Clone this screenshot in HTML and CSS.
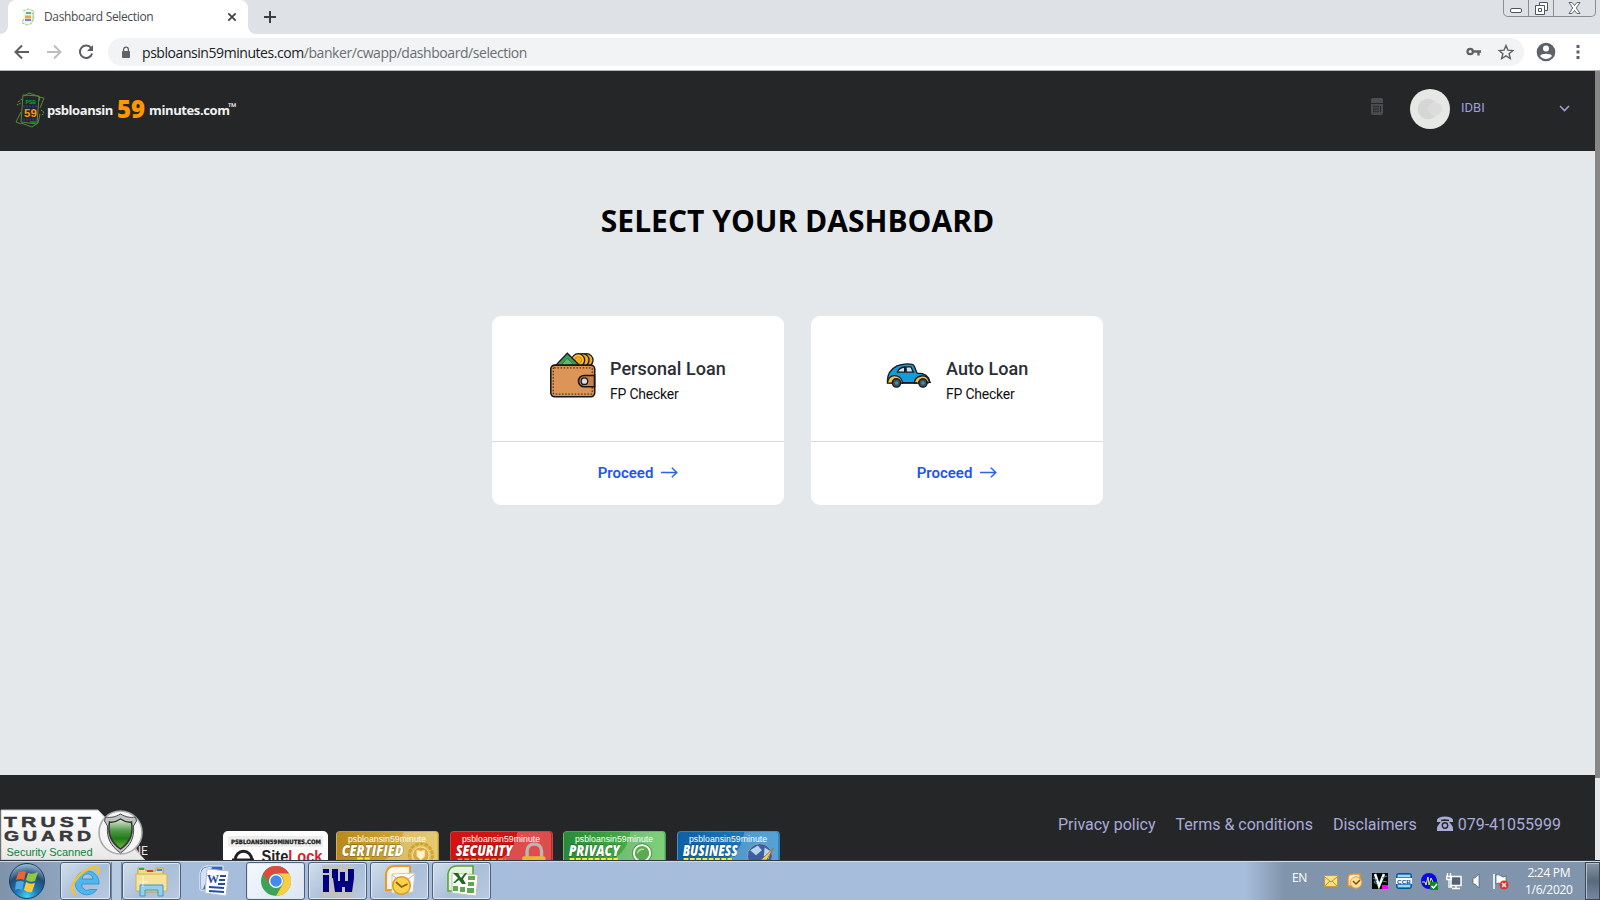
FILE: index.html
```html
<!DOCTYPE html>
<html lang="en">
<head>
<meta charset="utf-8">
<title>Dashboard Selection</title>
<link rel="stylesheet" href="styles.css">
</head>
<body>
<div class="tabstrip">
  <div class="tab">
    <svg class="favicon" width="16" height="18" viewBox="0 0 16 18"><path d="M4 2l9 1-1 12-9 1z" fill="#edf6e8"/><path d="M3 3l5-2 6 2-2 12-4 2-6-2 2-5M12 5l2 3-1 5" fill="none" stroke="#9ccb7c" stroke-dasharray="3 1"/><path d="M6 5h5" stroke="#55b98c" stroke-width="2"/><path d="M5 9h6" stroke="#f6a04c" stroke-width="3"/><path d="M5 12h6" stroke="#7788c8" stroke-width="2"/></svg>
    <span class="tab-title">Dashboard Selection</span>
    <svg width="10" height="10" viewBox="0 0 10 10"><path d="M1.3 1.3l7.4 7.4M8.7 1.3L1.3 8.7" stroke="#3c4043" stroke-width="1.7"/></svg>
  </div>
  <svg class="newtab" width="12" height="12" viewBox="0 0 12 12"><path d="M6 0v12M0 6h12" stroke="#3c4043" stroke-width="2"/></svg>
  <div class="winctl">
    <span class="wc wc-min"><svg width="14" height="8" viewBox="0 0 14 8"><rect x="1.500" y="2.500" width="11" height="4" rx="1.500" fill="#fff" stroke="#50545a"/></svg></span>
    <span class="wc wc-max"><svg width="13" height="13" viewBox="0 0 13 13"><path d="M4.500.5h8v8h-3v4h-9v-9h4z" fill="#fff" stroke="#50545a"/><path d="M4.500 3.500h5v5M3.500 6.500h3v3h-3z" fill="none" stroke="#50545a"/></svg></span>
    <span class="wc wc-close"><svg width="13" height="12" viewBox="0 0 13 12"><path d="M1 .5h3l2.500 3L9 .5h3L8.300 6l3.700 5.500H9L6.500 8.500 4 11.500H1L4.700 6z" fill="#fff" stroke="#50545a" stroke-width=".9"/></svg></span>
  </div>
</div>
<div class="toolbar">
  <svg class="nav" width="16" height="16" viewBox="0 0 16 16"><path d="M15 8H2M8 1.500L1.500 8 8 14.500" fill="none" stroke="#5a5e63" stroke-width="2"/></svg>
  <svg class="nav" width="16" height="16" viewBox="0 0 16 16"><path d="M1 8h13M8 1.500L14.500 8 8 14.500" fill="none" stroke="#bcbdbf" stroke-width="2"/></svg>
  <svg class="nav" width="16" height="16" viewBox="0 0 16 16"><path d="M13.200 4.200A6.200 6.200 0 1 0 14.100 9.500" fill="none" stroke="#5a5e63" stroke-width="2"/><path d="M15 1v6H9z" fill="#5a5e63"/></svg>
  <div class="omnibox">
    <svg width="10" height="13" viewBox="0 0 10 13"><rect x="1" y="5" width="8" height="7" rx="1" fill="#5f6368"/><path d="M2.600 5.500V3.500a2.400 2.400 0 0 1 4.800 0v2" fill="none" stroke="#5f6368" stroke-width="1.300"/></svg>
    <span class="url"><b>psbloansin59minutes.com</b>/banker/cwapp/dashboard/selection</span>
    <svg class="key" width="15" height="10" viewBox="0 0 15 10"><circle cx="4.200" cy="4.500" r="2.700" fill="none" stroke="#5f6368" stroke-width="2.300"/><path d="M7 4.500h8M12.500 4.500v4" stroke="#5f6368" stroke-width="2.400"/></svg>
    <svg width="16" height="16" viewBox="0 0 16 16"><path d="M8 1.500l1.900 4.600 5 .4-3.800 3.200 1.200 4.800L8 11.900l-4.300 2.600 1.200-4.800L1.100 6.500l5-.4z" fill="none" stroke="#5f6368" stroke-width="1.400"/></svg>
  </div>
  <svg class="person" width="20" height="20" viewBox="0 0 20 20"><circle cx="10" cy="10" r="9.300" fill="#5f6368"/><circle cx="10" cy="6.500" r="3" fill="#fff"/><path d="M4 14c1-3 11-3 12 0-3 4-9 4-12 0z" fill="#fff"/></svg>
  <svg width="4" height="14" viewBox="0 0 4 14"><path d="M.5 0h3v3h-3zM.5 5.500h3v3h-3zM.5 11h3v3h-3z" fill="#5f6368"/></svg>
</div>
<div class="viewport">
  <div class="page">
    <header class="header">
      <svg class="notes" width="30" height="36" viewBox="0 0 30 36"><g fill="none" stroke="#558a3c" stroke-width="1"><path d="M8 3l16 1-2 28-16-2z"/><path d="M9 4l5-3 11 4-1 4M24 5l5 1-4 10M25 22l-2 9-6 4-11-4M6 20L1 30l5 2"/><path d="M3 10l4-3M2 13l4-2M26 18l3 2-2 4" stroke="#a9b568" stroke-dasharray="1 1"/></g><path d="M8 14.500h14M8 27.500h14" stroke="#2a3180" stroke-width="2" stroke-dasharray="2 1"/><path d="M15 30h6" stroke="#087a2b" stroke-width="2"/><text x="10.500" y="12" class="n-psb" textLength="10.500" lengthAdjust="spacingAndGlyphs">PSB</text><text x="9" y="25" class="n-59">59</text></svg>
      <span class="brand-a">psbloansin</span><span class="brand-59">59</span><span class="brand-b">minutes.com</span><span class="brand-tm">™</span>
      <svg class="calc" width="12" height="17" viewBox="0 0 12 17"><path d="M2 0h8a2 2 0 0 1 2 2v3H0V2a2 2 0 0 1 2-2zM0 6h12v9a2 2 0 0 1-2 2H2a2 2 0 0 1-2-2z" fill="#4c4d50"/><path d="M2 8.500h6M2 11h6M2 13.500h6" stroke="#252628" stroke-width="1.500" stroke-dasharray="1.500 .7"/><path d="M9.500 8v6" stroke="#252628"/></svg>
      <svg class="avatar" width="40" height="40" viewBox="0 0 40 40"><circle cx="20" cy="20" r="20" fill="#e5e8e4"/><circle cx="18" cy="20" r="10.300" fill="#d5d6d5"/><circle cx="25.500" cy="20" r="6.500" fill="#dbdcdb" stroke="#e1e4e0" stroke-width=".7"/></svg>
      <span class="user">IDBI</span>
      <svg class="chev" width="11" height="7" viewBox="0 0 11 7"><path d="M1 1l4.500 4.500L10 1" fill="none" stroke="#9d9fda" stroke-width="1.600"/></svg>
    </header>
    <main class="main">
      <h1>SELECT YOUR DASHBOARD</h1>
      <div class="cards">
        <section class="card">
          <div class="card-top">
            <svg class="wallet" width="46" height="46" viewBox="0 0 46.500 46"><g stroke="#171717" stroke-width="1.300"><circle cx="37" cy="8" r="6.500" fill="#f5a91f"/><circle cx="33" cy="8" r="6.500" fill="#f5a91f"/><circle cx="28.500" cy="8" r="6.500" fill="#ffc02e"/><circle cx="28.500" cy="8" r="3.500" fill="#f7a91e" stroke="#c27c0c" stroke-width=".8"/><path d="M5 14L17.500 1l13 13z" fill="#3f9d57"/><path d="M11 13l6.500-7 7 7z" fill="#62b76f" stroke="#236b36" stroke-width=".8"/><rect x=".8" y="13" width="44.400" height="32" rx="4" fill="#dc9557" stroke-width="1.600"/></g><rect x="3.300" y="15.700" width="39.400" height="26.600" rx="1" fill="none" stroke="#4b321e" stroke-width="1.300" stroke-dasharray="1.500 1.700"/><path d="M45 23.500H34.500a5.700 5.700 0 0 0 0 11.400H45z" fill="#c98148" stroke="#171717" stroke-width="1.600"/><circle cx="34.800" cy="29.200" r="3.300" fill="#d9dde2" stroke="#171717" stroke-width="1.300"/></svg>
            <div><h2>Personal Loan</h2><p>FP Checker</p></div>
          </div>
          <a class="proceed">Proceed <svg width="17" height="11" viewBox="0 0 17 11"><path d="M0 5.500h15.500M10.800.7l5 4.800-5 4.800" fill="none" stroke="#2b62ef" stroke-width="1.500"/></svg></a>
        </section>
        <section class="card">
          <div class="card-top auto">
            <svg class="car" width="46" height="25" viewBox="0 0 47 26"><g stroke="#15191e" stroke-width="1.400"><path d="M1 19C1 12 5 6 11 3c4-2 12-2.500 16-1.500 3 .5 3 7 5 9 7 0 12 2 13 9l-2 1H3z" fill="#139bdc"/><path d="M1 21c0-10 14-11 16 0h-3c-1-6-7-6-8 0zM29 21c1-9 13-10 15-3l1.500 2-3 .5c-2-5-8-5-9 .5z" fill="#f6c443"/><path d="M11.500 9.500C13 5 16 4.500 19 4.200v5.300zM20.500 4h5l2.500 5.500h-7.500z" fill="#cde2f3"/><circle cx="10.500" cy="20.800" r="4.300" fill="#474c55"/><circle cx="38" cy="20.800" r="4.300" fill="#474c55"/></g><path d="M16 20.800h16" stroke="#15191e" stroke-width="1.500"/><circle cx="10.500" cy="20.800" r="1.800" fill="#2498d3"/><circle cx="38" cy="20.800" r="1.800" fill="#2498d3"/></svg>
            <div><h2>Auto Loan</h2><p>FP Checker</p></div>
          </div>
          <a class="proceed">Proceed <svg width="17" height="11" viewBox="0 0 17 11"><path d="M0 5.500h15.500M10.800.7l5 4.800-5 4.800" fill="none" stroke="#2b62ef" stroke-width="1.500"/></svg></a>
        </section>
      </div>
    </main>
    <footer class="footer">
      <svg class="trust" width="150" height="51" viewBox="0 0 150 51">
        <defs><linearGradient id="tg" x2="0" y2="1"><stop stop-color="#fff"/><stop offset="1" stop-color="#e8e8e8"/></linearGradient><linearGradient id="sh" x2="0" y2="1"><stop stop-color="#e2efda"/><stop offset=".4" stop-color="#4d9647"/><stop offset=".65" stop-color="#217c18"/><stop offset="1" stop-color="#70ba3e"/></linearGradient></defs>
        <text x="132.500" y="45.500" class="t-ne">NE</text>
        <path d="M1 1h97l47 50H1z" fill="url(#tg)" stroke="#bdbdbd"/>
        <text x="4" y="17.500" class="t-trust" textLength="91" lengthAdjust="spacingAndGlyphs">TRUST</text>
        <text x="4" y="32" class="t-trust" textLength="91" lengthAdjust="spacingAndGlyphs">GUARD</text>
        <text x="6.500" y="47" class="t-scan" textLength="86">Security Scanned</text>
        <circle cx="120.500" cy="23.500" r="21.500" fill="#f5f5f5" stroke="#aaa" stroke-width="1.600"/>
        <path d="M120.500 5c5 3 10 4 15 3l1 4-3 5c1 12-3 20-13 27-10-7-14-15-13-27l-3-5 1-4c5 1 10 0 15-3z" fill="#bfc2c1" stroke="#4b4d4c"/>
        <path d="M120.500 10q6 4 11 3c2 12-1 20-11 27-10-7-13-15-11-27q5 1 11-3z" fill="url(#sh)" stroke="#333" stroke-width="1.500"/>
      </svg>
      <div class="seals">
        <svg width="105" height="29" viewBox="0 0 105 29"><rect width="105" height="40" rx="5" fill="#fff"/><rect x="5" y="5" width="95" height="11" fill="#eee"/><text x="8" y="12.500" class="s-domain" textLength="90" lengthAdjust="spacingAndGlyphs">PSBLOANSIN59MINUTES.COM</text><path d="M12 32v-2c0-13 17-13 17 0v2" fill="none" stroke="#222" stroke-width="3"/><path d="M9 28.500h22" stroke="#222" stroke-width="2"/><text x="38.500" y="31" class="s-lock" textLength="61" lengthAdjust="spacingAndGlyphs">Site<tspan fill="#d81f2e">Lock</tspan></text></svg>
        <svg class="seal gold" viewBox="0 0 103 29"><path class="shine" d="M68 0h32q3 0 3 3v26H48Q64 22 68 0z"/><text x="10.500" y="10.300" class="s-url" textLength="81">psbloansin59minute</text><g stroke="#f8dfa0" fill="none"><circle cx="86" cy="24" r="12" stroke="#d6a02b" stroke-width="3" stroke-dasharray="4 1"/><circle cx="86" cy="24" r="8.500" fill="#d8a945"/><path d="M82 19q4 2 8 0v6l-4 4-4-4z" fill="#fff4c8"/></g><text x="4" y="25" class="s-name" textLength="64" lengthAdjust="spacingAndGlyphs">CERTIFIED</text><path d="M20 27.500h6M28 27.500h5" stroke="#f4ed32" stroke-width="2"/></svg>
        <svg class="seal red" viewBox="0 0 103 29"><path class="shine" d="M68 0h32q3 0 3 3v26H48Q64 22 68 0z"/><text x="10.500" y="10.300" class="s-url" textLength="81">psbloansin59minute</text><path d="M78 27v-7c0-10 15-10 15 0v7" fill="none" stroke="#b8b8b8" stroke-width="3.500"/><rect x="73" y="25" width="24" height="8" rx="2" fill="#eab632"/><text x="4" y="25" class="s-name" textLength="59" lengthAdjust="spacingAndGlyphs">SECURITY</text><path d="M6 28.300h50" stroke="#e69b1e" stroke-width="1.500" stroke-dasharray="5 2"/></svg>
        <svg class="seal green" viewBox="0 0 103 29"><path class="shine" d="M68 0h32q3 0 3 3v26H48Q64 22 68 0z"/><text x="10.500" y="10.300" class="s-url" textLength="81">psbloansin59minute</text><circle cx="80" cy="22" r="8.500" fill="#5caa50" stroke="#fff" stroke-width="2"/><circle cx="80" cy="22" r="10" fill="none" stroke="#568d4d"/><path d="M75 22q2-5 7-4" fill="none" stroke="#afe2a4" stroke-width="1.500"/><text x="4" y="25" class="s-name" textLength="53" lengthAdjust="spacingAndGlyphs">PRIVACY</text><path d="M5 28h50" stroke="#f4ed32" stroke-width="2" stroke-dasharray="5 1.500"/></svg>
        <svg class="seal blue" viewBox="0 0 103 29"><path class="shine" d="M68 0h32q3 0 3 3v26H48Q64 22 68 0z"/><text x="10.500" y="10.300" class="s-url" textLength="81">psbloansin59minute</text><circle cx="84" cy="25" r="13" fill="#405e9e" stroke="#9d9ac2"/><path d="M74 19l8-5 4 5-6 5zM89 16l6 4-2 8-5-3z" fill="#b7d7ed"/><path d="M85 29l13-12-7 12z" fill="#f3d55d" stroke="#8b742c"/><text x="4" y="25" class="s-name" textLength="57" lengthAdjust="spacingAndGlyphs">BUSINESS</text><path d="M5 28h50" stroke="#f4ed32" stroke-width="2" stroke-dasharray="5 1.500"/></svg>
      </div>
      <nav class="links"><a>Privacy policy</a><a>Terms &amp; conditions</a><a>Disclaimers</a><a class="phone"><svg width="16" height="16" viewBox="0 0 16 16"><path d="M0 6V3.500Q2 .5 8 .5t8 3V6h-4V3.700q-4-1-8 0V6zM4.500 5h7L15 9.500q1 1.500 1 3V15H0v-2.500q0-1.500 1-3z" fill="#a9abd9"/><circle cx="8" cy="9.500" r="2.700" fill="#a9abd9" stroke="#252628" stroke-width="1.400"/></svg>079-41055999</a></nav>
    </footer>
  </div>
  <div class="scroll"><div class="thumb"></div></div>
</div>
<div class="taskbar">
  <div class="start"><svg width="38" height="38" viewBox="0 0 38 38"><defs><radialGradient id="orb" cx=".5" cy=".95" r=".9"><stop stop-color="#46d2fe"/><stop offset=".35" stop-color="#1d7bb5"/><stop offset=".7" stop-color="#234b74"/><stop offset="1" stop-color="#8fb0ca"/></radialGradient></defs><circle cx="19" cy="19" r="17.500" fill="url(#orb)" stroke="#163e61"/><path d="M10 11q4-3 8-1l-2 8q-4-2-8 0z" fill="#f1652c"/><path d="M20 11q4 2 10-1l-3 9q-5 2-9-1z" fill="#94c840"/><path d="M8 20q4-2 8 0l-2 8q-4-2-7 0z" fill="#4aa8e6"/><path d="M18 20q4 3 9 1l-3 9q-4 1-8-2z" fill="#fcca36"/></svg></div>
  <div class="tb ie"><svg width="32" height="34" viewBox="0 0 32 34"><path d="M29 20a12 12 0 1 0-2 5.500h-7q-5 3-8-3v-2.500zM12 15q1-5 5.500-5t5.500 5z" fill="#4bb9ee" stroke="#2385c4" stroke-width=".7"/><path d="M6 30C-5 27 9 5 25 3q6 0 3 7" fill="none" stroke="#f4c331" stroke-width="2.600"/></svg></div>
  <div class="tb-sep"></div>
  <div class="tb ex"><svg width="34" height="32" viewBox="0 0 34 32"><path d="M3 3h6l2 3h10V3h7v24H3z" fill="#f5dc87" stroke="#c7a24b"/><path d="M4 4h5" stroke="#2eab4c" stroke-width="2"/><path d="M12 6h6" stroke="#d83b2c" stroke-width="2"/><path d="M22 5h5" stroke="#3689d5" stroke-width="2"/><path d="M1 9h31v17H1z" fill="#f7e29a" stroke="#d3b258"/><path d="M5 31V20h23v11h-5v-6H10v6z" fill="#8fd1ee" stroke="#4796c2"/><path d="M8 11v11M3 17h10" stroke="#fff" opacity=".7"/></svg></div>
  <div class="tb plain"><svg width="32" height="32" viewBox="0 0 32 32"><path d="M2 25V8q1-7 8-7h15v24z" fill="#3768b1" stroke="#f0f5ff"/><path d="M3 24V8q1-6 8-6h3L5 24z" fill="#d4e2f5"/><path d="M9 4l22 2-3 25L7 28z" fill="#fcfdff" stroke="#b5c0ce"/><path d="M22 11h6M21 15h6M20 19h7M11 22l15 1M11 26l15 1" stroke="#234e9c" stroke-width="2"/><text x="9" y="18" class="w-w">W</text></svg></div>
  <div class="tb active"><svg width="30" height="30" viewBox="0 0 30 30"><circle cx="15" cy="15" r="15" fill="#3ba457"/><path d="M2 7.500A15 15 0 0 1 28 7.500H15A7.500 7.500 0 0 0 8.500 18.700z" fill="#dd4b3e"/><path d="M28 7.500A15 15 0 0 1 15 30l6.500-11.300A7.500 7.500 0 0 0 15 7.500z" fill="#fbcd42"/><circle cx="15" cy="15" r="7" fill="#fff"/><circle cx="15" cy="15" r="5.700" fill="#4688f1"/></svg></div>
  <div class="tb"><svg width="32" height="32" viewBox="0 0 32 32"><path fill="#c2c2c2" d="M0 0h32v32H0z"/><path d="M1 4h6v4H1zM1 10h6v17H1zM10 4h6v12h2V7h5v9h3V4h6v9l-2 14h-7v-5h-3v5h-7l-2-14h-1z" fill="#000080"/></svg></div>
  <div class="tb"><svg width="32" height="32" viewBox="0 0 32 32"><path d="M2 25V9q1-8 9-8h15v24z" fill="#fff7e5" stroke="#ed9828" stroke-width="2"/><path d="M8 9l23-1-2 19-21 1z" fill="#fbfbfb" stroke="#c9c9c9"/><path d="M8 10l11 8 12-9" fill="none" stroke="#b9b9b9"/><circle cx="17.500" cy="20.500" r="8.800" fill="#fbd24d" stroke="#d99921" stroke-width="1.500"/><path d="M12 17l5.500 5 6-3" fill="none" stroke="#91610d" stroke-width="1.700"/></svg></div>
  <div class="tb"><svg width="32" height="32" viewBox="0 0 32 32"><path d="M2 26V9q1-8 9-8h16v25z" fill="#e5f2dc" stroke="#55a63a" stroke-width="1.600"/><path d="M6 8l26 2-2 21-24-3z" fill="#fff" stroke="#b7c6af"/><path d="M22 11h7v4h-7zM22 17h6v4h-6zM21 23h7v5h-7zM14 22h5v5h-5zM7 21h5v5H7z" fill="#61a653"/><path d="M7 8h5l3 5 4-5h2l-4 6 3 5h-4l-3-4-4 3H7l5-5z" fill="#256522"/></svg></div>
  <div class="tray">
    <span class="lang">EN</span>
    <svg width="14" height="12" viewBox="0 0 14 12"><path d="M.5.500h13v11H.5z" fill="#fbe08c" stroke="#c9983a"/><path d="M1 2l6 5 6-5M1 11l5-5M13 11L8 6" fill="none" stroke="#bb8b32"/></svg>
    <svg width="16" height="16" viewBox="0 0 16 16"><path d="M1 13V5q0-4 5-4h7v12z" fill="#fff1d3" stroke="#e98c25" stroke-width="1.500"/><circle cx="9" cy="9.500" r="5.700" fill="#fde09a" stroke="#e5a042"/><path d="M6 8l3 3 4-4" fill="none" stroke="#765011" stroke-width="1.500"/></svg>
    <svg width="16" height="16" viewBox="0 0 16 16"><path fill="#050505" d="M0 0h16v16H0z"/><path d="M3 1l4 12 5-12" fill="none" stroke="#fff" stroke-width="2.500"/><path d="M1 5l4 2-3 2 4 3M10 5l5-2M10 8l5 1" fill="none" stroke="#33a3aa"/><path fill="#f0e" d="M10 12h6v4h-6z"/></svg>
    <svg width="16" height="16" viewBox="0 0 16 16"><rect x=".5" y=".5" width="15" height="15" rx="2" fill="#3485c9" stroke="#075794"/><path d="M2 3h12M2 13h12" stroke="#9bdbf2" stroke-width="2"/><path fill="#fff" d="M0 5h16v6H0z"/><text x="1" y="10.500" class="ccb" textLength="14" lengthAdjust="spacingAndGlyphs">CCB</text></svg>
    <svg width="17" height="17" viewBox="0 0 17 17"><circle cx="8" cy="8" r="8" fill="#0909e7"/><path d="M1 9h3l1 3 2-8 1 8 2-7 2 4" fill="none" stroke="#e7ef4a"/><path fill="#0b8b22" d="M9 9h8v8H9z"/><path d="M10.500 13l2 2 3.500-4" fill="none" stroke="#fff" stroke-width="1.500"/></svg>
    <svg width="16" height="17" viewBox="0 0 16 17"><path d="M5 3.500h10v9H5z" fill="#536273" stroke="#fff" stroke-width="1.500"/><path d="M6 15.500h8M10 13v2M1.500 0v3M4.500 0v3M.700 3.500h4.600v3H.700zM3 7v7h3" fill="none" stroke="#fff" stroke-width="1.300"/></svg>
    <svg class="spk" width="9" height="16" viewBox="0 0 9 16"><path d="M1 5h2l4-4v14l-4-4H1z" fill="#fff" stroke="#5b6470" stroke-width=".8"/></svg>
    <svg class="flag" width="16" height="17" viewBox="0 0 16 17"><path d="M1 1v15" stroke="#fff" stroke-width="1.600"/><path d="M3 2q3-1 5 1t5 0v8q-3 2-5 0t-5 0z" fill="#fff" stroke="#4d5867" stroke-width=".7"/><circle cx="11" cy="12" r="4.500" fill="#dc352b"/><path d="M9 10l4 4M13 10l-4 4" stroke="#fff" stroke-width="1.300"/></svg>
    <div class="clock"><span>2:24 PM</span><span>1/6/2020</span></div>
    <div class="peek"></div>
  </div>
</div>
</body>
</html>
```
FILE: styles.css
```css
* { box-sizing: border-box; }
body { margin: 0; width: 1600px; height: 900px; overflow: hidden; display: flex; flex-direction: column; font-family: Roboto, sans-serif; background: #fff; }
svg { display: block; flex: none; }
h1, h2, p { margin: 0; }

/* browser frame */
.tabstrip { height: 34px; flex: none; background: linear-gradient(#fff, #fff) 0 100% / 256px 8px no-repeat, #dee1e6; display: flex; align-items: center; position: relative; }
.tabstrip::before, .tabstrip::after { content: ""; width: 8px; height: 34px; background: #dee1e6; border-bottom-right-radius: 8px; flex: none; }
.tabstrip::after { position: absolute; left: 248px; top: 0; border-radius: 0 0 0 8px; }
.tab { width: 240px; height: 34px; background: #fff; border-radius: 8px 8px 0 0; display: flex; align-items: center; padding: 0 11px 0 12px; }
.tab-title { font: 12px "Open Sans", sans-serif; letter-spacing: -.34px; color: #45494d; margin: -1px 0 0 8px; flex: 1; white-space: nowrap; }
.newtab { margin-left: 16px; }
.winctl { margin-left: auto; margin-right: 4px; align-self: flex-start; display: flex; height: 17px; border: 1px solid #8a8e94; border-top: 0; border-radius: 0 0 5px 5px; }
.wc { display: flex; align-items: center; justify-content: center; border-left: 1px solid #8a8e94; }
.wc:first-child { border-left: 0; }
.wc-min { width: 24px; padding-top: 4px; }
.wc-max { width: 25px; }
.wc-close { width: 42px; }
.toolbar { height: 37px; flex: none; border-bottom: 1px solid #b3b4b5; display: flex; align-items: center; padding: 0 20px 0 14px; }
.nav { margin-right: 16px; }
.omnibox { flex: 1; height: 28px; border-radius: 14px; background: #f1f3f4; display: flex; align-items: center; padding: 0 10px 0 13px; margin: 0 12px 0 -2px; }
.url { font: 14px "Open Sans", sans-serif; color: #6a6e72; margin-left: 11px; flex: 1; white-space: nowrap; letter-spacing: -.44px; }
.url b { font-weight: 400; color: #202124; }
.key { margin-right: 17px; }
.person { margin-right: 20px; }

/* page */
.viewport { height: 789px; flex: none; display: flex; }
.page { width: 1595px; display: flex; flex-direction: column; }
.scroll { width: 5px; background: #e4e8eb; }
.thumb { height: 707px; background: #878787; }
.header { height: 80px; background: #252628; display: flex; align-items: center; padding: 0 25px 4px 15px; color: #fff; }
.notes { margin-top: 2px; }
.n-psb { font: bold 6px "Liberation Sans", sans-serif; fill: #12a33b; }
.n-59 { font: bold 11.5px "Liberation Sans", sans-serif; fill: #ff9800; }
.brand-a, .brand-b { font: bold 13px "Open Sans", sans-serif; color: #f2f2f2; margin-top: 1px; white-space: nowrap; }
.brand-a { width: 70px; margin-left: 2px; letter-spacing: -.44px; }
.brand-b { width: 79px; letter-spacing: -.38px; }
.brand-59 { font: 800 24px/24px "Open Sans", sans-serif; color: #ff9800; width: 32px; }
.brand-tm { font: bold 11px "Open Sans", sans-serif; margin-top: -5px; }
.calc { margin: -6px 27px 0 auto; }
.avatar { margin-right: 11px; }
.user { font-size: 13px; color: #9d9fda; width: 98px; margin-top: -3px; }
.chev { margin-top: -2px; }
.main { height: 624px; background: #e4e8eb; padding-top: 49px; }
h1 { font: bold 30px/42px "Open Sans", sans-serif; text-align: center; color: #000; white-space: nowrap; }
.cards { display: flex; justify-content: center; gap: 27px; margin-top: 74px; }
.card { width: 292px; height: 189px; background: #fff; border-radius: 9px; display: flex; flex-direction: column; }
.card-top { height: 126px; border-bottom: 1px solid #d9dadb; display: flex; padding: 36px 0 0 58px; gap: 14px; }
.card-top.auto { padding-left: 75px; }
.car { margin-top: 11px; }
h2 { font-size: 18px; font-weight: 500; line-height: 24px; color: #2a2e35; margin-top: 5px; letter-spacing: .04px; }
.card p { font-size: 14px; line-height: 20px; margin-top: 3px; color: #111; letter-spacing: -.22px; }
.proceed { flex: 1; display: flex; align-items: center; justify-content: center; gap: 8px; padding-bottom: 2px; color: #1e55ea; font-size: 15px; font-weight: 600; }
.footer { height: 85px; background: #252628; display: flex; overflow: hidden; }
.trust { margin-top: 34px; }
.seals { display: flex; margin: 56px 0 0 73px; gap: 8px; }
.seal { width: 103px; height: 29px; border-radius: 4px 4px 0 0; border: 1px solid #aaa5; border-bottom: 0; margin-right: 3px; }
.gold { background: linear-gradient(90deg, #b8891c, #dcb942); }
.red { background: #d01313; margin-right: 2px; }
.green { background: linear-gradient(90deg, #278a38, #55c050); }
.blue { background: linear-gradient(90deg, #0e60a5, #1c86c8); }
.shine { fill: #fff; opacity: .25; }
.t-ne { font: 12px Roboto, sans-serif; fill: #e5e5e5; }
.t-trust { font: bold 15px "Liberation Sans", sans-serif; fill: #38393c; stroke: #38393c; stroke-width: .5px; letter-spacing: 3px; }
.t-scan { font: 11px "Liberation Sans", sans-serif; fill: #0c8138; }
.s-domain { font: bold 6px "DejaVu Sans", sans-serif; fill: #222; stroke: #222; stroke-width: .3px; }
.s-lock { font: bold 16px "Liberation Sans", sans-serif; fill: #222; }
.s-url { font: 9px "Liberation Sans", sans-serif; fill: #fff; }
.s-name { font: italic 800 17px "Open Sans", sans-serif; fill: #fff; paint-order: stroke; stroke: #0007; stroke-width: 1px; }
.links { margin: 39px 34px 0 auto; display: flex; gap: 20px; height: 20px; align-items: center; font-size: 16px; color: #a9abd9; white-space: nowrap; }
.phone { display: flex; align-items: center; gap: 5px; }

/* taskbar */
.taskbar { height: 40px; flex: none; background: #a6bedb; border-top: 1px solid #30373f; box-shadow: inset 0 1px #cbdcec; display: flex; padding-top: 1px; }
.start { width: 60px; padding-left: 8px; background: linear-gradient(90deg, #7f93ab, #8fa4bf); }
.tb { width: 59px; margin-right: 3px; border: 1px solid #4f6178; border-radius: 3px; display: flex; align-items: center; justify-content: center; background: linear-gradient(135deg, #d2deec, #a9bed8 55%, #b9cbe1); box-shadow: inset 0 0 0 1px #dce7f3; }
.tb.ie { width: 51px; margin: 0; }
.tb.plain { background: none; border-color: transparent; box-shadow: none; }
.tb.active { background: linear-gradient(135deg, #f4f8fc, #dce6f1); }
.tb-sep { width: 11px; border: solid #71849b; border-width: 0 1px; background: #b6cbe2; }
.w-w { font: bold 12px "Liberation Serif", serif; fill: #234e9c; }
.tray { margin-left: auto; width: 355px; padding-left: 47px; background: linear-gradient(90deg, #a6bedb, #8094ab 40px); display: flex; align-items: center; gap: 8.6px; color: #fff; }
.lang { font: 12px "Open Sans", sans-serif; width: 24px; margin-top: -7px; letter-spacing: -.3px; }
.spk { margin-left: 1px; }
.flag { margin-left: 3px; }
.clock { width: 56px; margin-left: 4px; font: 12px/17px "Open Sans", sans-serif; letter-spacing: -.3px; text-align: center; display: flex; flex-direction: column; white-space: nowrap; }
.peek { width: 15px; height: 38px; margin-left: auto; border: 1px solid #3a4654; background: linear-gradient(#8795a5, #596a7d 50%, #7688a0); box-shadow: inset 1px 1px #b4c0cd; }
.ccb { font: bold 6px "Liberation Sans", sans-serif; fill: #0a4c8a; }
```
